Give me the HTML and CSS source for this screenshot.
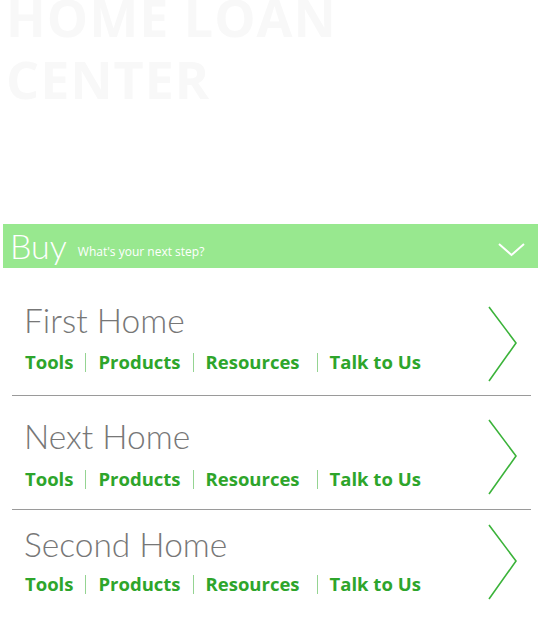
FILE: index.html
```html
<!DOCTYPE html>
<html>
<head>
<meta charset="utf-8">
<link rel="stylesheet" href="styles.css">
</head>
<body>
<header class="hero">
  <h1 class="hero-title"><span class="hero-line">HOME LOAN</span><span class="hero-line">CENTER</span></h1>
</header>
<div class="bar">
  <span class="bar-title">Buy</span>
  <span class="bar-sub">What's your next step?</span>
  <svg class="bar-chev" width="28" height="14" viewBox="0 0 28 14"><polyline points="1,1 13.5,12 26,1" fill="none" stroke="#fff" stroke-width="2"/></svg>
</div>
<main class="list">
  <section class="item item-1">
    <div class="item-body">
      <h2 class="item-title">First Home</h2>
      <nav class="links"><a>Tools</a><span class="sep"></span><a>Products</a><span class="sep"></span><a class="wide">Resources</a><span class="sep"></span><a>Talk to Us</a></nav>
    </div>
    <svg class="chev" width="30" height="76" viewBox="0 0 30 76"><polyline points="1,1 28,37 1,75" fill="none" stroke="#3bb33a" stroke-width="1.6"/></svg>
  </section>
  <section class="item item-2">
    <div class="item-body">
      <h2 class="item-title">Next Home</h2>
      <nav class="links"><a>Tools</a><span class="sep"></span><a>Products</a><span class="sep"></span><a class="wide">Resources</a><span class="sep"></span><a>Talk to Us</a></nav>
    </div>
    <svg class="chev" width="30" height="76" viewBox="0 0 30 76"><polyline points="1,1 28,37 1,75" fill="none" stroke="#3bb33a" stroke-width="1.6"/></svg>
  </section>
  <section class="item item-3">
    <div class="item-body">
      <h2 class="item-title">Second Home</h2>
      <nav class="links"><a>Tools</a><span class="sep"></span><a>Products</a><span class="sep"></span><a class="wide">Resources</a><span class="sep"></span><a>Talk to Us</a></nav>
    </div>
    <svg class="chev" width="30" height="76" viewBox="0 0 30 76"><polyline points="1,1 28,37 1,75" fill="none" stroke="#3bb33a" stroke-width="1.6"/></svg>
  </section>
</main>
</body>
</html>
```
FILE: styles.css
```css
html, body {
  margin: 0;
  padding: 0;
  background: #fff;
}
body {
  font-family: "Open Sans", "Liberation Sans", sans-serif;
  width: 543px;
  overflow: hidden;
}
.hero {
  height: 224px;
  overflow: hidden;
}
.hero-title {
  margin: -14px 0 0 6px;
  font-family: "Open Sans", sans-serif;
  font-weight: 700;
  font-size: 52px;
  letter-spacing: 1px;
  color: #f8f8f8;
}
.hero-line {
  display: block;
  height: 62px;
  line-height: 62px;
}
.bar {
  margin-left: 3px;
  width: 535px;
  height: 44px;
  background: #98e88f;
  display: flex;
  align-items: center;
  box-sizing: border-box;
  padding: 0 12px 0 7px;
  color: #fff;
}
.bar-title {
  font-family: "Lato", sans-serif;
  font-weight: 300;
  font-size: 34px;
  line-height: 44px;
}
.bar-sub {
  margin-left: 11px;
  margin-top: 10px;
  font-size: 12px;
  color: #fff;
}
.bar-chev {
  margin-left: auto;
  margin-top: 8px;
}
.list {
  margin: 0 12px;
}
.item {
  display: flex;
  align-items: flex-start;
  padding-left: 12px;
  padding-right: 13px;
  border-bottom: 1px solid #9a9a9a;
}
.item-3 {
  border-bottom: none;
}
.item-body {
  flex: 1;
}
.item-title {
  margin: 0;
  font-family: "Lato", sans-serif;
  font-weight: 300;
  font-size: 33.5px;
  line-height: 40px;
  color: #777;
}
.links {
  display: flex;
  align-items: center;
  font-weight: 700;
  font-size: 18.5px;
  line-height: 24px;
  color: #2ea52b;
  padding-left: 1px;
}
.sep {
  display: inline-block;
  width: 1px;
  height: 19px;
  background: #95d492;
  margin: 0 12px 0 12px;
}
.links .wide {
  margin-right: 5px;
}
.chev {
  margin-bottom: -60px;
}
.item-1 { padding-top: 32px; padding-bottom: 21px; }
.item-1 .links { margin-top: 10px; }
.item-1 .chev { margin-top: 6px; }
.item-2 { padding-top: 20px; padding-bottom: 18px; }
.item-2 .links { margin-top: 11px; }
.item-2 .chev { margin-top: 3px; }
.item-3 { padding-top: 14px; padding-bottom: 20px; }
.item-3 .links { margin-top: 8px; }
.item-3 .chev { margin-top: 0; }
```
